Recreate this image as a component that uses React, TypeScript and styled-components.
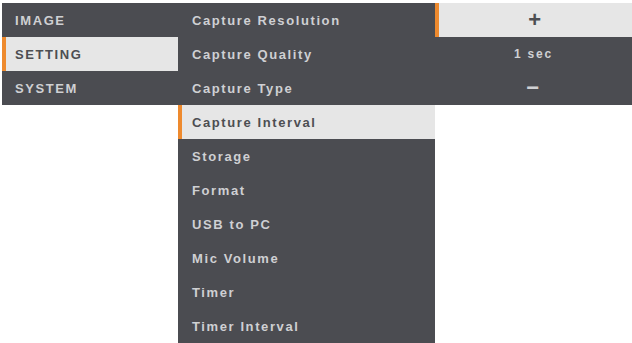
import React from 'react';
import styled, { createGlobalStyle } from 'styled-components';

const GlobalStyle = createGlobalStyle`
  html, body {
    margin: 0;
    padding: 0;
    background: #ffffff;
  }
  body {
    font-family: "Liberation Sans", Arial, sans-serif;
  }
`;

const Screen = styled.div`
  display: flex;
  align-items: flex-start;
  width: 632px;
  height: 343px;
  padding: 3px 0 0 2px;
  box-sizing: border-box;
  overflow: hidden;
`;

const Panel = styled.ul<{ $width: number }>`
  list-style: none;
  margin: 0;
  padding: 0;
  width: ${(p) => p.$width}px;
  background: #4b4c51;
  flex-shrink: 0;
`;

const Item = styled.li<{ $active?: boolean; $center?: boolean; $indent?: number }>`
  display: flex;
  align-items: center;
  justify-content: ${(p) => (p.$center ? 'center' : 'flex-start')};
  height: 34px;
  box-sizing: border-box;
  padding-left: ${(p) => (p.$center ? 0 : p.$indent ?? 13)}px;
  font-size: 13px;
  font-weight: bold;
  letter-spacing: 1.6px;
  color: ${(p) => (p.$active ? '#4d4e52' : '#cfd0d3')};
  background: ${(p) => (p.$active ? '#e6e6e6' : 'transparent')};
  border-left: ${(p) => (p.$active ? '4px solid #ee8a2e' : '0')};
  ${(p) => (p.$active && !p.$center ? `padding-left: ${(p.$indent ?? 13) - 4}px;` : '')}
`;

const Value = styled.span`
  font-size: 12px;
  letter-spacing: 1.8px;
`;

const Sign = styled.span`
  font-size: 22px;
  font-weight: bold;
  line-height: 1;
`;

const categories = ['IMAGE', 'SETTING', 'SYSTEM'];
const settings = [
  'Capture Resolution',
  'Capture Quality',
  'Capture Type',
  'Capture Interval',
  'Storage',
  'Format',
  'USB to PC',
  'Mic Volume',
  'Timer',
  'Timer Interval',
];

export default function App() {
  return (
    <>
      <GlobalStyle />
      <Screen>
        <Panel $width={176}>
          {categories.map((c) => (
            <Item key={c} $active={c === 'SETTING'}>
              {c}
            </Item>
          ))}
        </Panel>
        <Panel $width={257}>
          {settings.map((s) => (
            <Item key={s} $active={s === 'Capture Interval'} $indent={14}>
              {s}
            </Item>
          ))}
        </Panel>
        <Panel $width={197}>
          <Item $active $center>
            <Sign>+</Sign>
          </Item>
          <Item $center>
            <Value>1 sec</Value>
          </Item>
          <Item $center>
            <Sign>−</Sign>
          </Item>
        </Panel>
      </Screen>
    </>
  );
}
